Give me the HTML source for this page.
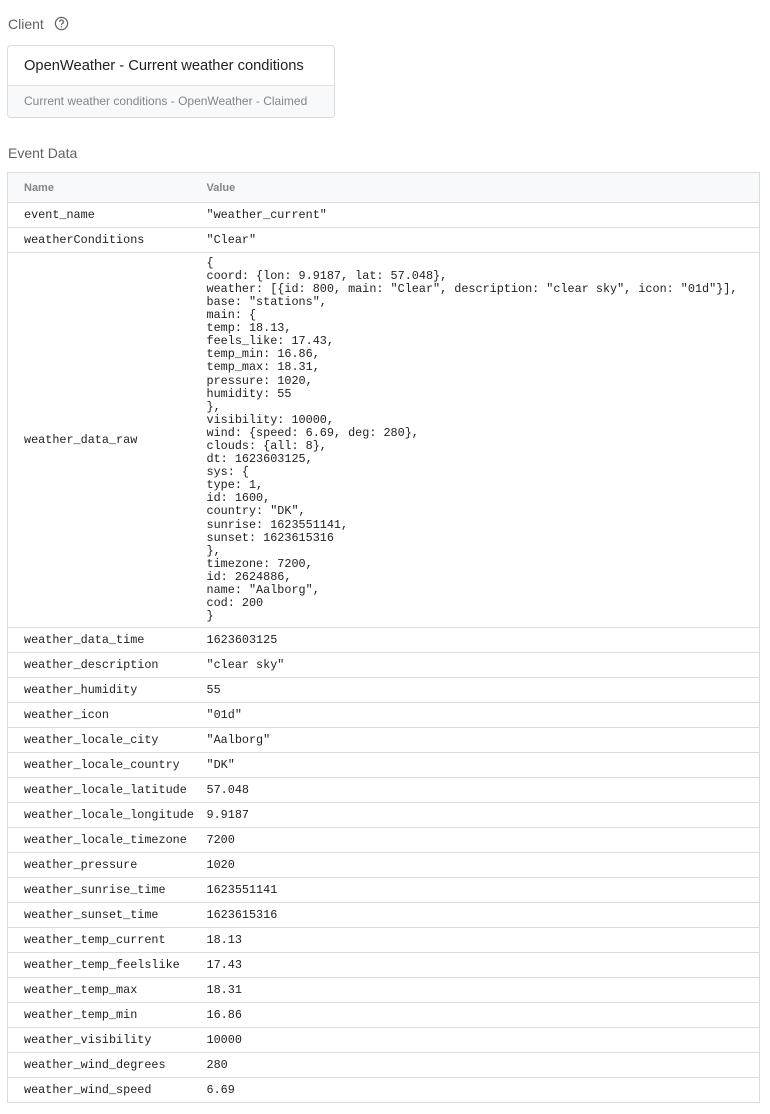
<!DOCTYPE html>
<html><head><style>
body{margin:0;background:#fff;font-family:"Liberation Sans",Arial,sans-serif;width:770px;height:1114px;overflow:hidden}
.lbl{position:absolute;left:8px;font-size:14px;color:#5f6368}
.card{position:absolute;left:7px;top:45px;width:326px;height:71px;border:1px solid #dadce0;border-radius:4px;overflow:hidden}
.card .t{height:39px;line-height:40px;padding-left:16px;font-size:14.7px;color:#202124;border-bottom:1px solid #e0e0e0}
.card .s{height:31px;line-height:31px;background:#f8f9fa;padding-left:16px;font-size:12px;color:#80868b}
table{position:absolute;left:7px;top:172px;width:753px;border-collapse:collapse;border:1px solid #dadce0;table-layout:fixed}
th{background:#f8f9fa;height:29px;text-align:left;font-size:11px;color:#80868b;font-weight:bold;padding:0 0 0 16px;border-bottom:1px solid #dadce0}
td{height:24px;font-family:"Liberation Mono",monospace;font-size:11.8px;color:#202124;padding:0 0 0 16px;border-bottom:1px solid #dadce0;white-space:pre;overflow:visible}
td pre{margin:0;font-family:inherit;font-size:11.8px;line-height:13.1px}
</style></head><body>
<div class="lbl" style="top:16px">Client <svg width="15" height="15" viewBox="0 0 16 16" style="vertical-align:-2px;margin-left:6px"><circle cx="8" cy="8" r="6.5" fill="none" stroke="#5f6368" stroke-width="1.3"/><path d="M6 6.3a2 2 0 1 1 2.8 1.8c-.6.3-.8.6-.8 1.3" fill="none" stroke="#5f6368" stroke-width="1.3"/><circle cx="8" cy="11.4" r=".8" fill="#5f6368"/></svg></div>
<div class="card"><div class="t">OpenWeather - Current weather conditions</div><div class="s">Current weather conditions - OpenWeather - Claimed</div></div>
<div class="lbl" style="top:145px">Event Data</div>
<table>
<colgroup><col style="width:183px"><col></colgroup>
<tr><th>Name</th><th>Value</th></tr>
<tr><td>event_name</td><td>"weather_current"</td></tr>
<tr><td>weatherConditions</td><td>"Clear"</td></tr>
<tr><td style="height:374px">weather_data_raw</td><td style="height:374px"><pre>{
coord: {lon: 9.9187, lat: 57.048},
weather: [{id: 800, main: "Clear", description: "clear sky", icon: "01d"}],
base: "stations",
main: {
temp: 18.13,
feels_like: 17.43,
temp_min: 16.86,
temp_max: 18.31,
pressure: 1020,
humidity: 55
},
visibility: 10000,
wind: {speed: 6.69, deg: 280},
clouds: {all: 8},
dt: 1623603125,
sys: {
type: 1,
id: 1600,
country: "DK",
sunrise: 1623551141,
sunset: 1623615316
},
timezone: 7200,
id: 2624886,
name: "Aalborg",
cod: 200
}</pre></td></tr>
<tr><td>weather_data_time</td><td>1623603125</td></tr>
<tr><td>weather_description</td><td>"clear sky"</td></tr>
<tr><td>weather_humidity</td><td>55</td></tr>
<tr><td>weather_icon</td><td>"01d"</td></tr>
<tr><td>weather_locale_city</td><td>"Aalborg"</td></tr>
<tr><td>weather_locale_country</td><td>"DK"</td></tr>
<tr><td>weather_locale_latitude</td><td>57.048</td></tr>
<tr><td>weather_locale_longitude</td><td>9.9187</td></tr>
<tr><td>weather_locale_timezone</td><td>7200</td></tr>
<tr><td>weather_pressure</td><td>1020</td></tr>
<tr><td>weather_sunrise_time</td><td>1623551141</td></tr>
<tr><td>weather_sunset_time</td><td>1623615316</td></tr>
<tr><td>weather_temp_current</td><td>18.13</td></tr>
<tr><td>weather_temp_feelslike</td><td>17.43</td></tr>
<tr><td>weather_temp_max</td><td>18.31</td></tr>
<tr><td>weather_temp_min</td><td>16.86</td></tr>
<tr><td>weather_visibility</td><td>10000</td></tr>
<tr><td>weather_wind_degrees</td><td>280</td></tr>
<tr><td>weather_wind_speed</td><td>6.69</td></tr>
</table>
</body></html>
